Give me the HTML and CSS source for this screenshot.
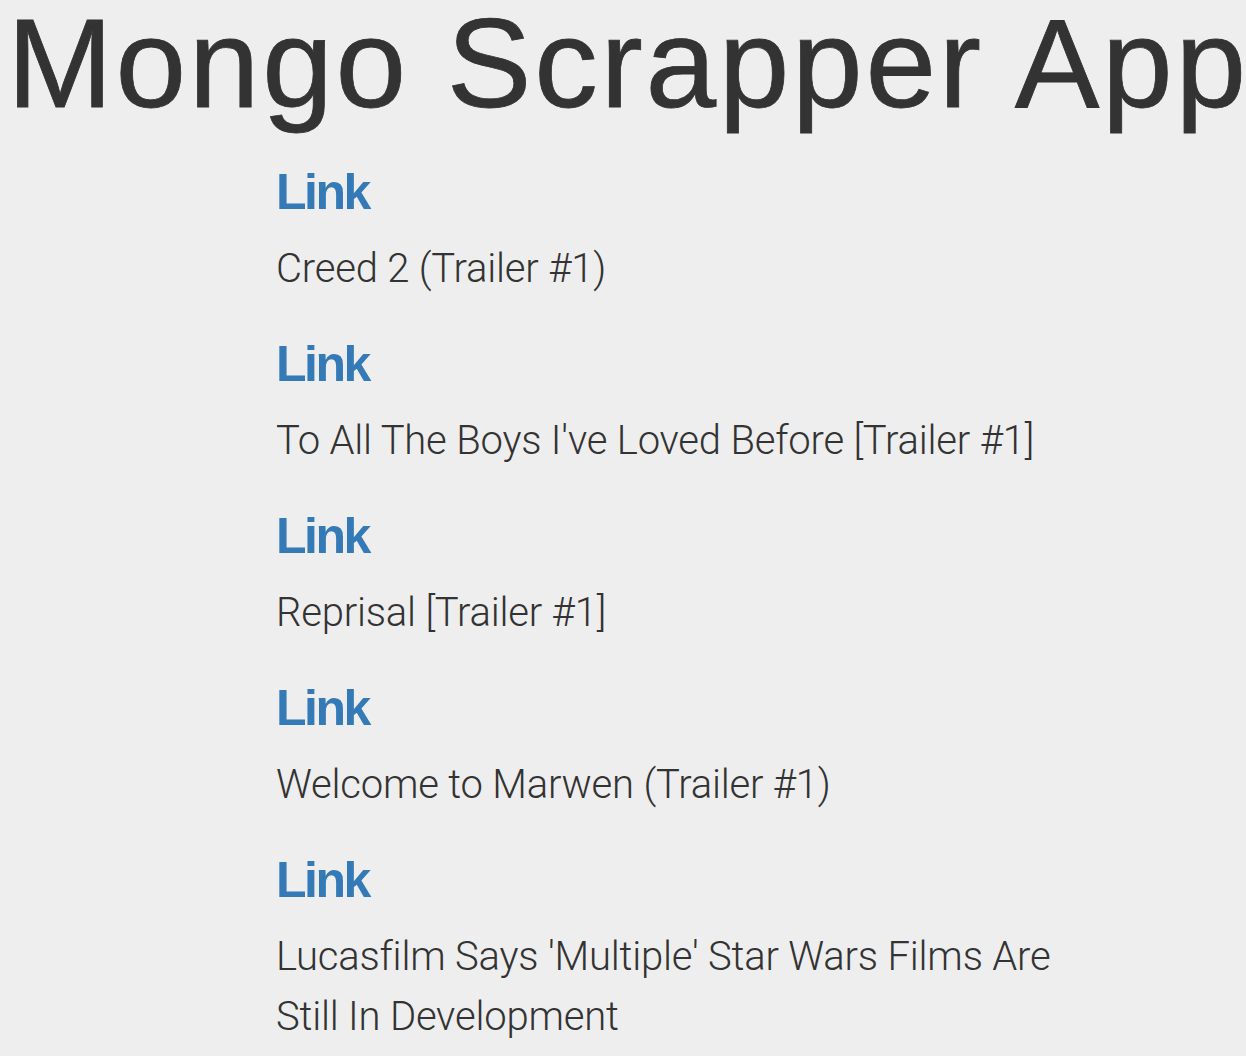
FILE: index.html
```html
<!DOCTYPE html>
<html lang="en">
<head>
<meta charset="utf-8">
<title>Mongo Scrapper App</title>
<link rel="stylesheet" href="styles.css">
</head>
<body>
<h1 class="title">Mongo Scrapper App</h1>
<main class="articles">
  <div class="article">
    <a class="article-link" href="#">Link</a>
    <p class="article-title">Creed 2 (Trailer #1)</p>
  </div>
  <div class="article">
    <a class="article-link" href="#">Link</a>
    <p class="article-title">To All The Boys I've Loved Before [Trailer #1]</p>
  </div>
  <div class="article">
    <a class="article-link" href="#">Link</a>
    <p class="article-title">Reprisal [Trailer #1]</p>
  </div>
  <div class="article">
    <a class="article-link" href="#">Link</a>
    <p class="article-title">Welcome to Marwen (Trailer #1)</p>
  </div>
  <div class="article">
    <a class="article-link" href="#">Link</a>
    <p class="article-title">Lucasfilm Says 'Multiple' Star Wars Films Are Still In Development</p>
  </div>
</main>
</body>
</html>
```
FILE: styles.css
```css
html, body {
  margin: 0;
  padding: 0;
  background: #eeeeee;
  overflow: hidden;
}
body {
  font-family: "Liberation Sans", Arial, sans-serif;
  color: #333333;
}
.title {
  margin: 0;
  padding-left: 7px;
  font-family: "Liberation Sans", Arial, sans-serif;
  font-weight: 400;
  font-size: 127px;
  line-height: 1;
  letter-spacing: 2.7px;
  -webkit-text-stroke: 0.8px #333333;
  color: #333333;
  white-space: nowrap;
}
.articles {
  padding: 34.7px 0 0 276px;
  width: 790px;
}
.article {
  display: flex;
  flex-direction: column;
  gap: 17.6px;
  margin-bottom: 34.4px;
}
.article-link {
  display: block;
  font-family: "Liberation Sans", Arial, sans-serif;
  font-weight: 700;
  font-size: 50px;
  line-height: 60px;
  letter-spacing: -2.5px;
  color: #337ab7;
  text-decoration: none;
}
.article-title {
  margin: 0;
  font-family: Roboto, sans-serif;
  font-weight: 300;
  font-size: 40px;
  line-height: 60px;
  letter-spacing: -0.2px;
  color: #333333;
}
```
